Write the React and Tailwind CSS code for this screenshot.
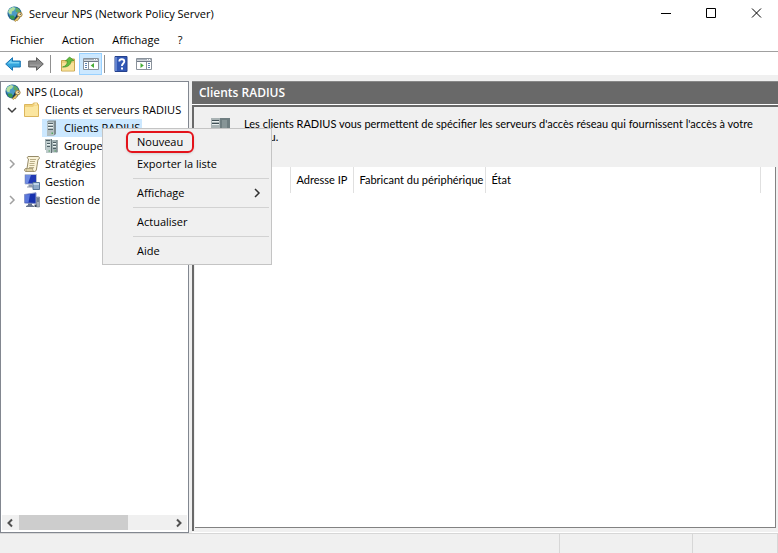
import React from "react";

function GlobeIcon() {
  return (
    <svg className="h-4 w-4 shrink-0" viewBox="0 0 16 16" aria-hidden="true">
      <circle cx="7.500" cy="7.500" r="7" fill="#24648f" />
      <circle cx="6.500" cy="6" r="5.300" fill="#4b9bc6" />
      <path d="M2.500 3 6 1l2.500 1L7 4.500 5 5.500 4.500 8.500 2 7.500 1.200 5.500Z" fill="#b3dfa0" />
      <path d="M9 1.500l3 1.500 1.600 2.500-2.400 1.600L8.500 5.500Z" fill="#5fa865" />
      <path d="M3 9.500l3.500 0 1.500 2-2 2.500L3 12Z" fill="#3a9a4f" />
      <path d="M10.500 8.500 8 14" stroke="#16344f" strokeWidth="1.500" />
      <circle cx="12.800" cy="8.600" r="2.300" fill="#f6e5b0" stroke="#a3803a" />
      <path d="M11.300 10.400 7.200 14.600l1.400.8 1-1 .9.3 2.200-3.400Z" fill="#e8c76a" stroke="#94712b" strokeWidth=".6" />
      <circle cx="13.300" cy="8.200" r=".7" fill="#555" />
    </svg>
  );
}

function FolderIcon() {
  return (
    <svg className="h-4 w-4 shrink-0" viewBox="0 0 16 16" aria-hidden="true">
      <path d="M.5 2.500h8l1-1.500h4v1.500h1v12H.5Z" fill="#f0d078" stroke="#dcb65c" />
      <path d="M1 5h8l1-1.500h4V14H1Z" fill="#fbe6a0" />
      <path d="M10.500 2h2.500" stroke="#fff8dc" />
    </svg>
  );
}

function ServerIcon() {
  return (
    <svg className="h-4 w-4 shrink-0" viewBox="0 0 16 16" aria-hidden="true">
      <path d="M4 1.500 5.500.5H13v13.500L11 15.500H4Z" fill="#7e8b90" />
      <path d="M4 1.500h7v14H4Z" fill="#b4c0c2" />
      <path d="M5 3.500h5M5 6.500h5M5 9.500h5" stroke="#56656b" />
      <path d="M5 4.500h5M5 7.500h5" stroke="#edf3f3" />
      <path d="M8.500 12.500H10V14H8.500z" fill="#4fa85a" />
    </svg>
  );
}

function ServerGroupIcon() {
  return (
    <svg className="h-4 w-4 shrink-0" viewBox="0 0 16 16" aria-hidden="true">
      <path d="M2 1h6v11H2z" fill="#a4b1b4" />
      <path d="M8 1h1v10H8z" fill="#68767b" />
      <path d="M3 3h5v12H3z" fill="#bccacb" />
      <path d="M9 2h5.500v12.500H9z" fill="#a3b2b4" />
      <path d="M13.500 2h1v12l-1 .5z" fill="#68767b" />
      <path d="M3 2.500h4M10 4.500h3M4 5.500h3M10 7.500h3M4 8.500h3M10 10.500h3" stroke="#4f6066" />
      <path d="M4 6.500h3M10 5.500h3M10 8.500h3" stroke="#eef4f4" />
      <path d="M8.500 4v11" stroke="#5f6d73" />
      <path d="M5.500 13h1.500M11.500 13H13" stroke="#50a05a" />
    </svg>
  );
}

function ScrollIcon() {
  return (
    <svg className="h-4 w-4 shrink-0" viewBox="0 0 16 16" aria-hidden="true">
      <path d="M4 .5h10.500c1.500 1 1 3-.5 3L12.500 13c0 1.500-1 2.500-2 2.500H2c-2 0-2-3 0-3h1L4.500 3C3 2.500 3 1 4 .5Z" fill="#faf3d8" stroke="#968b68" />
      <path d="M6 3.500h6M6 5.500h5M5.500 7.500h5M5.500 9.500h5M5 11.500h5" stroke="#a89c74" strokeWidth=".8" />
      <path d="M2 12.500h7c-1 1 0 2.500 1 3H2Z" fill="#ded2a4" stroke="#968b68" strokeWidth=".7" />
    </svg>
  );
}

function AccountingIcon() {
  return (
    <svg className="h-4 w-4 shrink-0" viewBox="0 0 16 16" aria-hidden="true">
      <path d="M1 .5h11.500v9.500H1z" fill="#2139b4" stroke="#b5bfd0" />
      <path d="M1.500 1H7L4 9.500H1.500z" fill="#6f8ce2" />
      <path d="M4.500 10.500h4v2h1v1H3v-1h1.500z" fill="#8f9aac" />
      <path d="M9 8.500h6.500v7H9z" fill="#8fabc9" stroke="#587799" />
      <path d="M9.500 9h5.500v2H9.500z" fill="#c0d6e8" />
    </svg>
  );
}

function ComputerIcon() {
  return (
    <svg className="h-4 w-4 shrink-0" viewBox="0 0 16 16" aria-hidden="true">
      <path d="M.5 2.500 12 .8v10.700L.5 11z" fill="#1832ad" stroke="#8794cb" />
      <path d="M1 3l5-.8L4.500 10.500H1z" fill="#5b78db" />
      <path d="M4 11.500h4v1.500l2 1v1H2v-1l2-1z" fill="#66748f" />
      <path d="M12.500 5H15.500v10h-3z" fill="#a2acba" stroke="#667286" strokeWidth=".6" />
      <path d="M13 7h2M13 9h2" stroke="#41506c" />
      <path d="M10.500 12.500h2v2.500h-2z" fill="#39475e" />
    </svg>
  );
}

function ArrowIcon({ forward }) {
  return (
    <svg className={forward ? "h-4 w-4 rotate-180" : "h-4 w-4"} viewBox="0 0 16 16" aria-hidden="true">
      <path d="M.7 8 7.500 1.700V5h7.800v6H7.500v3.300Z" fill={forward ? "#8b8b8b" : "#35a5dd"} stroke={forward ? "#5e5e5e" : "#1c76b3"} strokeLinejoin="round" />
      <path d="M2.500 7.500 6.500 4v2h7.700v1.500Z" fill={forward ? "#9e9e9e" : "#79d2f3"} />
    </svg>
  );
}

function UpFolderIcon() {
  return (
    <svg className="h-4 w-4" viewBox="0 0 16 16" aria-hidden="true">
      <path d="M1.500 4.500h5L8 3h6.500v12h-13Z" fill="#ecd07c" stroke="#c9a650" />
      <path d="M2 7h12v7.500H2z" fill="#f8e29a" />
      <path d="M2.500 11C5.500 10.500 7.500 8 7.500 5H5.500L9.500 1l4.500 3.500-3 .5c0 3.500-3 6.500-8.500 6Z" fill="#62bd40" stroke="#3f9128" strokeWidth=".7" />
    </svg>
  );
}

function PaneIcon({ action }) {
  return (
    <svg className="h-4 w-4 shrink-0" viewBox="0 0 16 16" aria-hidden="true">
      <path d="M.5 2.500h15v11H.5z" fill="#fff" stroke="#8a929b" />
      <path d="M1 3h14v1.500H1z" fill="#a9b1ba" />
      <path d="M11 3.500h1M13 3.500h1" stroke="#fff" />
      <path d="M1 5.500h14" stroke="#6f7a88" />
      <path d={action ? "M10.500 6v7" : "M5.500 6v7"} stroke="#8a929b" />
      <path d={action ? "M12 7.500h2M12 9.500h2M12 11.500h2" : "M2 7.500h2M2 9.500h2M2 11.500h2"} stroke="#5f83b5" />
      <path d={action ? "M4.500 7v5L7.800 9.500Z" : "M11 7v5L7.700 9.500Z"} fill="#48ad37" />
    </svg>
  );
}

function HelpIcon() {
  return (
    <svg className="h-4 w-4" viewBox="0 0 16 16" aria-hidden="true">
      <path d="M2 .5h12v15H2z" fill="#3258b5" stroke="#24418c" />
      <path d="M2 1h2v14H2z" fill="#6484cf" />
      <path d="M6.300 5.500c0-3 5-3 5 0 0 2-2.400 2-2.400 4.500" fill="none" stroke="#fff" strokeWidth="1.800" />
      <path d="M8 11.500h2v2H8z" fill="#fff" />
    </svg>
  );
}

function Chevron({ down, className = "" }) {
  return (
    <svg className={`h-3 w-3 shrink-0 ${className}`} viewBox="0 0 12 12" fill="none" stroke="currentColor" aria-hidden="true">
      <path d={down ? "M2 4l4 4 4-4" : "M4 2l4 4-4 4"} strokeWidth="1.500" />
    </svg>
  );
}

function ScrollArrow({ left }) {
  return (
    <svg className="h-3 w-3 shrink-0" viewBox="0 0 12 12" fill="none" stroke="currentColor" strokeWidth="2" aria-hidden="true">
      <path d={left ? "M8 2.500 4.500 6 8 9.500" : "M4 2.500 7.500 6 4 9.500"} />
    </svg>
  );
}

function ToolButton({ label, active, children }) {
  return (
    <button
      type="button"
      aria-label={label}
      aria-pressed={active}
      className={`flex h-[22px] w-[23px] items-center justify-center ${active ? "border border-[#99d1ff] bg-[#cce8ff]" : ""}`}
    >
      {children}
    </button>
  );
}

const tree = [
  { text: "NPS (Local)", icon: GlobeIcon, level: 0 },
  { text: "Clients et serveurs RADIUS", icon: FolderIcon, level: 1, open: true },
  { text: "Clients RADIUS", icon: ServerIcon, level: 2, selected: true },
  { text: "Groupe", icon: ServerGroupIcon, level: 2 },
  { text: "Stratégies", icon: ScrollIcon, level: 1, closed: true },
  { text: "Gestion", icon: AccountingIcon, level: 1 },
  { text: "Gestion de", icon: ComputerIcon, level: 1, closed: true },
];

const indents = ["pl-[3px]", "pl-[5px]", "pl-[41px]"];

function TreeRow({ item }) {
  const Icon = item.icon;
  return (
    <li role="treeitem" aria-selected={!!item.selected} aria-level={item.level + 1} className={`flex h-[18px] items-center whitespace-nowrap ${indents[item.level]}`}>
      {item.level === 1 && (
        <span className="flex w-[17px] shrink-0">
          {item.open && <Chevron down className="text-[#404040]" />}
          {item.closed && <Chevron className="text-[#a0a0a0]" />}
        </span>
      )}
      <span className={`flex h-full items-center gap-[5px] pr-[2px] pl-px ${item.selected ? "bg-[#cce8ff]" : ""}`}>
        <Icon />
        {item.text}
      </span>
    </li>
  );
}

function MenuItem({ children, submenu, marked }) {
  return (
    <button type="button" role="menuitem" className="flex h-[22px] w-full items-center justify-between pr-[6px] pl-[21px] text-left">
      <span className={marked ? "flex h-[22px] items-center rounded-md border-2 border-[#e3131b] px-[9px] shadow" : "px-[11px]"}>{children}</span>
      {submenu && <Chevron className="text-[#303030]" />}
    </button>
  );
}

function MenuSeparator() {
  return <div role="separator" className="flex h-[7px] items-center pl-7"><div className="h-px w-full bg-[#d2d2d2]" /></div>;
}

function ContextMenu() {
  return (
    <div role="menu" className="absolute top-[128px] left-[102px] w-[170px] border border-[#c4c4c4] bg-[#f0f0f0] p-[2px]">
      <MenuItem marked>Nouveau</MenuItem>
      <MenuItem>Exporter la liste</MenuItem>
      <MenuSeparator />
      <MenuItem submenu>Affichage</MenuItem>
      <MenuSeparator />
      <MenuItem>Actualiser</MenuItem>
      <MenuSeparator />
      <MenuItem>Aide</MenuItem>
    </div>
  );
}

export default function App() {
  return (
    <div className="relative flex min-h-screen flex-col bg-[#f0f0f0] font-['Open_Sans',sans-serif] text-[11px] leading-4 text-black">
      <header className="bg-white">
        <div className="flex h-7 items-center pl-[7px]">
          <GlobeIcon />
          <h1 className="ml-[6px] flex-1">Serveur NPS (Network Policy Server)</h1>
          <div className="flex">
            <button type="button" aria-label="Réduire" className="flex h-7 w-[45px] items-center justify-center">
              <svg className="h-3 w-3" viewBox="0 0 12 12" stroke="#000"><path d="M1 5.500h10" /></svg>
            </button>
            <button type="button" aria-label="Agrandir" className="flex h-7 w-[45px] items-center justify-center">
              <svg className="h-3 w-3" viewBox="0 0 12 12" fill="none" stroke="#000"><path d="M1.500.5h9v9h-9z" /></svg>
            </button>
            <button type="button" aria-label="Fermer" className="flex h-7 w-[45px] items-center justify-center">
              <svg className="h-3 w-3" viewBox="0 0 12 12" stroke="#000"><path d="M2 .5l9 9M11 .5l-9 9" /></svg>
            </button>
          </div>
        </div>
        <nav className="flex h-6 items-center gap-[18px] border-b border-[#a0a0a0] pl-[10px]">
          <button type="button">Fichier</button>
          <button type="button">Action</button>
          <button type="button">Affichage</button>
          <button type="button">?</button>
        </nav>
        <div role="toolbar" className="flex h-[23px] items-center pl-px">
          <ToolButton label="Précédent"><ArrowIcon /></ToolButton>
          <ToolButton label="Suivant"><ArrowIcon forward /></ToolButton>
          <span className="mr-[5px] ml-[3px] h-[18px] w-px bg-[#909090]" />
          <ToolButton label="Dossier parent"><UpFolderIcon /></ToolButton>
          <ToolButton label="Arborescence" active><PaneIcon /></ToolButton>
          <span className="mr-1 ml-[2px] h-[18px] w-px bg-[#909090]" />
          <ToolButton label="Aide"><HelpIcon /></ToolButton>
          <ToolButton label="Volet Actions"><PaneIcon action /></ToolButton>
        </div>
      </header>

      <main className="flex flex-1 gap-[3px] pt-[6px]">
        <aside className="flex w-[189px] shrink-0 flex-col border border-[#828790] bg-white pb-[2px]">
          <ul role="tree" className="flex-1 pt-px">
            {tree.map((item) => <TreeRow key={item.text} item={item} />)}
          </ul>
          <div className="mx-px flex h-[15px] items-center bg-[#f0f0f0] px-[2px] text-[#505050]">
            <button type="button" aria-label="Défiler à gauche"><ScrollArrow left /></button>
            <div className="mr-[2px] ml-[3px] h-full flex-1"><div className="h-full w-[72%] bg-[#cdcdcd]" /></div>
            <button type="button" aria-label="Défiler à droite"><ScrollArrow /></button>
          </div>
        </aside>

        <section className="flex min-w-0 flex-1 flex-col border-b border-white">
          <h2 className="flex h-[23px] items-center border-t border-[#888] bg-[#696969] pl-[7px] text-[12px] font-semibold text-white">Clients RADIUS</h2>
          <div className="mb-px flex flex-1 flex-col border-t border-white">
            <div className="flex flex-1 flex-col border-t-2 border-l-2 border-[#696969] font-['Lato',sans-serif] text-[11px]">
              <div className="flex h-[60px] items-start pt-[10px] pl-[17px]">
                <svg className="h-[19px] w-[19px] shrink-0" viewBox="0 0 19 19" aria-hidden="true">
                  <path d="M0 1h10v18H0z" fill="#a9b3b4" />
                  <path d="M1 3.500h7M1 6.500h7" stroke="#405056" />
                  <path d="M1 4.500h7M1 7.500h7" stroke="#e8eeee" />
                  <path d="M9 1h10v18H9z" fill="#6f7e81" />
                  <path d="M11 3h5v14h-5z" fill="#879597" />
                </svg>
                <p className="mr-1 ml-[14px] max-w-[528px] leading-[13px]">
                  Les clients RADIUS vous permettent de spécifier les serveurs d&apos;accès réseau qui fournissent l&apos;accès à votre réseau.
                </p>
              </div>
              <div className="mr-[2px] mb-[3px] ml-px flex-1 border-r border-b border-[#828282] bg-white">
                <table className="w-full table-fixed border-collapse">
                  <thead>
                    <tr className="h-[26px] text-left">
                      <td className="w-[95px] border-r border-[#e0e0e0]" />
                      <th scope="col" className="w-[63px] border-r border-[#e0e0e0] pl-[6px] font-normal whitespace-nowrap">Adresse IP</th>
                      <th scope="col" className="w-[132px] border-r border-[#e0e0e0] pl-[6px] font-normal whitespace-nowrap">Fabricant du périphérique</th>
                      <th scope="col" className="border-r border-[#e0e0e0] pl-[6px] font-normal">État</th>
                      <td className="w-[15px]" />
                    </tr>
                  </thead>
                </table>
              </div>
            </div>
          </div>
        </section>
      </main>

      <footer className="flex h-5 border-t border-[#d7d7d7]">
        <div className="flex-1 border-r border-[#d7d7d7]" />
        <div className="w-[133px] border-r border-[#d7d7d7]" />
        <div className="w-[85px] border-r border-[#d7d7d7]" />
      </footer>
      <ContextMenu />
    </div>
  );
}
